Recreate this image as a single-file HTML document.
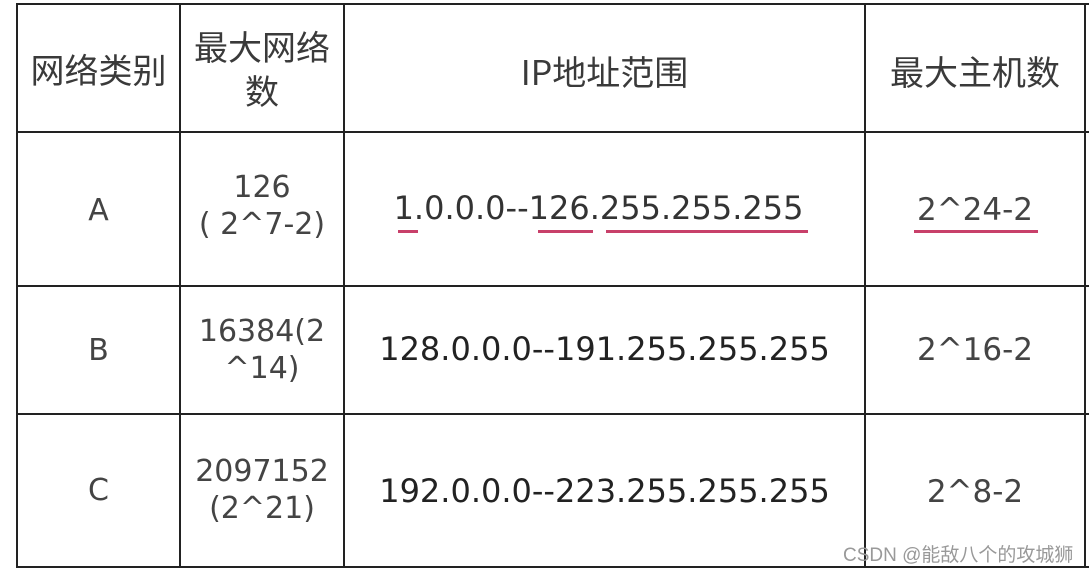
<!DOCTYPE html>
<html><head><meta charset="utf-8"><style>
body{margin:0;width:1089px;height:571px;background:#fff;position:relative;overflow:hidden;font-family:"DejaVu Sans","Noto Sans CJK SC",sans-serif;color:#333}
.v{position:absolute;top:3px;width:2px;height:565px;background:#222}
.h{position:absolute;left:16px;width:1073px;height:2px;background:#222}
.t{position:absolute;text-align:center;white-space:nowrap}
.c{font-family:"Noto Sans CJK SC",sans-serif;font-size:34px;color:#3a3a3a}
.n{font-size:30px;color:#444;line-height:37px}
.ip{font-size:32px;color:#222}
.u{position:absolute;height:3px;background:#c8406a;top:230px}
</style></head><body>
<div class="v" style="left:16px"></div><div class="v" style="left:179px"></div><div class="v" style="left:343px"></div><div class="v" style="left:864px"></div><div class="v" style="left:1084px"></div>
<div class="h" style="top:3px"></div><div class="h" style="top:131px"></div><div class="h" style="top:285px"></div><div class="h" style="top:413px"></div><div class="h" style="top:566px"></div>

<div class="t c" style="left:18px;width:161px;top:44px">网络类别</div>
<div class="t c" style="left:181px;width:162px;top:24px;line-height:44px">最大网络<br>数</div>
<div class="t c" style="left:345px;width:519px;top:46px">IP地址范围</div>
<div class="t c" style="left:866px;width:218px;top:46px">最大主机数</div>

<div class="t n" style="left:18px;width:161px;top:192px">A</div>
<div class="t n" style="left:181px;width:162px;top:169px">126<br>( 2^7-2)</div>
<div class="t ip" style="left:339px;width:519px;top:189px;color:#333;font-size:32px">1.0.0.0--126.255.255.255</div>
<div class="t n" style="left:866px;width:218px;top:192px;font-size:31px">2^24-2</div>
<div class="u" style="left:398px;width:20px"></div><div class="u" style="left:538px;width:55px"></div><div class="u" style="left:606px;width:202px"></div><div class="u" style="left:914px;width:124px"></div>

<div class="t n" style="left:18px;width:161px;top:332px">B</div>
<div class="t n" style="left:181px;width:162px;top:313px">16384(2<br>^14)</div>
<div class="t ip" style="left:345px;width:519px;top:330px">128.0.0.0--191.255.255.255</div>
<div class="t n" style="left:866px;width:218px;top:332px;font-size:31px">2^16-2</div>

<div class="t n" style="left:18px;width:161px;top:472px">C</div>
<div class="t n" style="left:181px;width:162px;top:453px">2097152<br>(2^21)</div>
<div class="t ip" style="left:345px;width:519px;top:472px">192.0.0.0--223.255.255.255</div>
<div class="t n" style="left:866px;width:218px;top:474px;font-size:31px">2^8-2</div>

<div class="t" style="left:843px;top:540px;font-family:'Liberation Sans','Noto Sans CJK SC',sans-serif;font-size:19px;color:#999">CSDN @能敌八个的攻城狮</div>
</body></html>
